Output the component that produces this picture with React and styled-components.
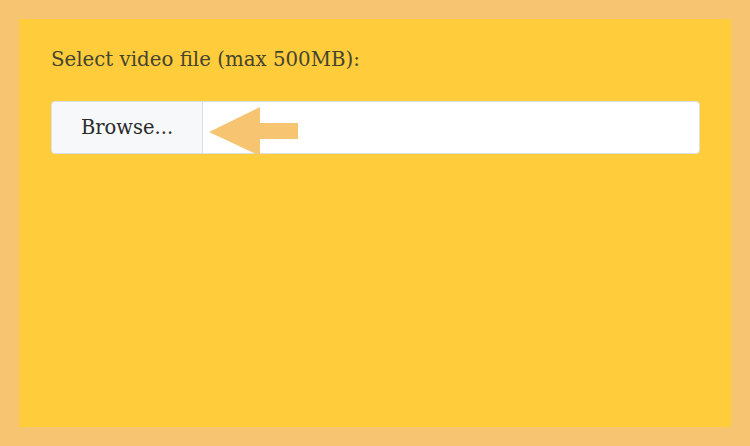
import React from "react";
import styled, { createGlobalStyle } from "styled-components";

const Global = createGlobalStyle`
  html, body { margin: 0; padding: 0; }
  body { width: 750px; height: 446px; overflow: hidden; }
`;

const Frame = styled.div`
  box-sizing: border-box;
  width: 750px;
  height: 446px;
  background: #f7c572;
  padding: 19px;
  display: flex;
`;

const Panel = styled.div`
  flex: 1;
  background: #ffcd3c;
  padding: 26px 31px 0 32px;
  display: flex;
  flex-direction: column;
  font-family: "DejaVu Serif", "Liberation Serif", serif;
`;

const Label = styled.label`
  font-size: 19.8px;
  line-height: 30px;
  color: #45442e;
  margin-bottom: 26px;
`;

const FileInput = styled.div`
  position: relative;
  box-sizing: border-box;
  height: 53px;
  display: flex;
  background: #ffffff;
  border: 1px solid #dcdfe6;
  border-radius: 4px;
`;

const BrowseButton = styled.div`
  box-sizing: border-box;
  width: 151px;
  display: flex;
  align-items: center;
  justify-content: center;
  background: #f6f8fa;
  border-right: 1px solid #dcdfe6;
  border-radius: 4px 0 0 4px;
  font-size: 19.5px;
  color: #2a2a2a;
`;

const Arrow = styled.svg`
  position: absolute;
  left: 157px;
  top: 4px;
  width: 90px;
  height: 50px;
`;

export default function App() {
  return (
    <>
      <Global />
      <Frame>
        <Panel>
          <Label>Select video file (max 500MB):</Label>
          <FileInput>
            <BrowseButton>Browse...</BrowseButton>
            <Arrow viewBox="0 0 90 50">
              <polygon
                points="0,26 51,1 51,17 89,17 89,33 51,33 51,50"
                fill="#f7c572"
              />
            </Arrow>
          </FileInput>
        </Panel>
      </Frame>
    </>
  );
}
